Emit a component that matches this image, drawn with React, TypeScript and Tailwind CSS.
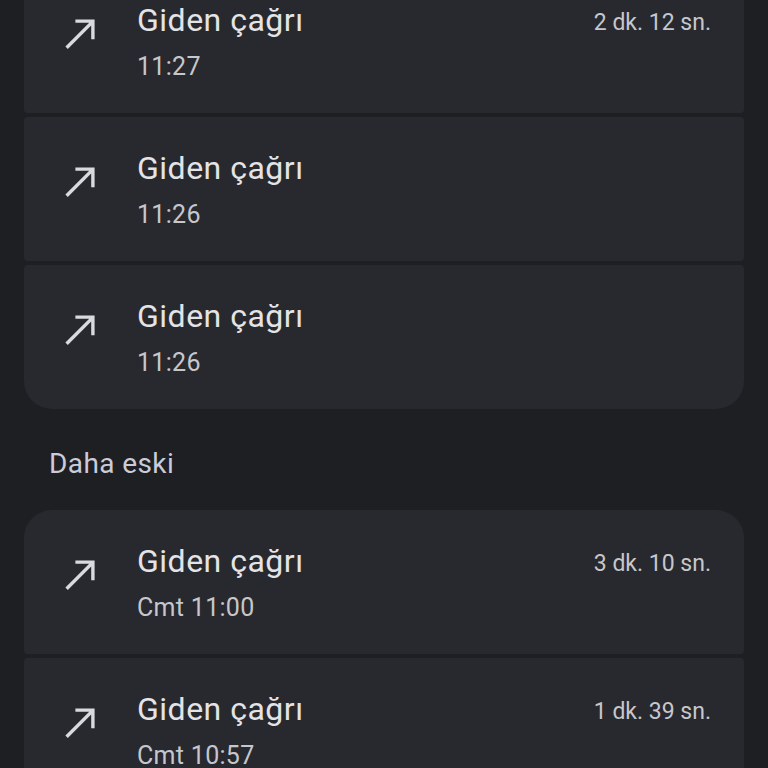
import React from 'react';

type Call = { time: string; duration?: string };

const today: Call[] = [
  { time: '11:27', duration: '2 dk. 12 sn.' },
  { time: '11:26' },
  { time: '11:26' },
];

const older: Call[] = [
  { time: 'Cmt 11:00', duration: '3 dk. 10 sn.' },
  { time: 'Cmt 10:57', duration: '1 dk. 39 sn.' },
];

const OutgoingIcon: React.FC = () => (
  <svg viewBox="0 0 24 24" className="w-12 h-12 shrink-0" fill="#d9dade">
    <path d="M9.2 5.2v1.7h6.9L4.2 18.8 5.4 20 17.1 8.2v6.9h1.7V5.2z" />
  </svg>
);

const CallRow: React.FC<{ call: Call; first: boolean; last: boolean }> = ({ call, first, last }) => (
  <div
    className={`h-[144px] bg-[#28292e] flex items-start pl-[33px] pr-[33px] ${
      first ? 'rounded-t-[28px]' : 'rounded-t-[4px]'
    } ${last ? 'rounded-b-[28px]' : 'rounded-b-[4px]'}`}
  >
    <div className="pt-[40px]">
      <OutgoingIcon />
    </div>
    <div className="flex-1 pl-[32px] pt-[32px]">
      <div className="text-[32px] leading-[38px] tracking-[0.5px] text-[#e4e4e7]">Giden çağrı</div>
      <div className="mt-[12px] text-[25px] leading-[32px] tracking-[0.3px] text-[#c6c7cc]">{call.time}</div>
    </div>
    {call.duration && (
      <div className="pt-[38px] text-[23px] leading-[32px] text-[#c6c7cc]">{call.duration}</div>
    )}
  </div>
);

const Group: React.FC<{ calls: Call[] }> = ({ calls }) => (
  <div className="flex flex-col gap-[4px] mx-[24px]">
    {calls.map((c, i) => (
      <CallRow key={i} call={c} first={i === 0} last={i === calls.length - 1} />
    ))}
  </div>
);

const App: React.FC = () => {
  return (
    <div
      className="w-[768px] h-[768px] overflow-hidden bg-[#1e1f23]"
      style={{ fontFamily: 'Roboto, "Noto Sans", sans-serif' }}
    >
      <div className="mt-[-31px]">
        <Group calls={today} />
        <div className="h-[101px] flex items-center pt-[8px] pl-[49px] text-[28px] tracking-[0.4px] text-[#cbccd9]">
          Daha eski
        </div>
        <Group calls={older} />
      </div>
    </div>
  );
};

export default App;
